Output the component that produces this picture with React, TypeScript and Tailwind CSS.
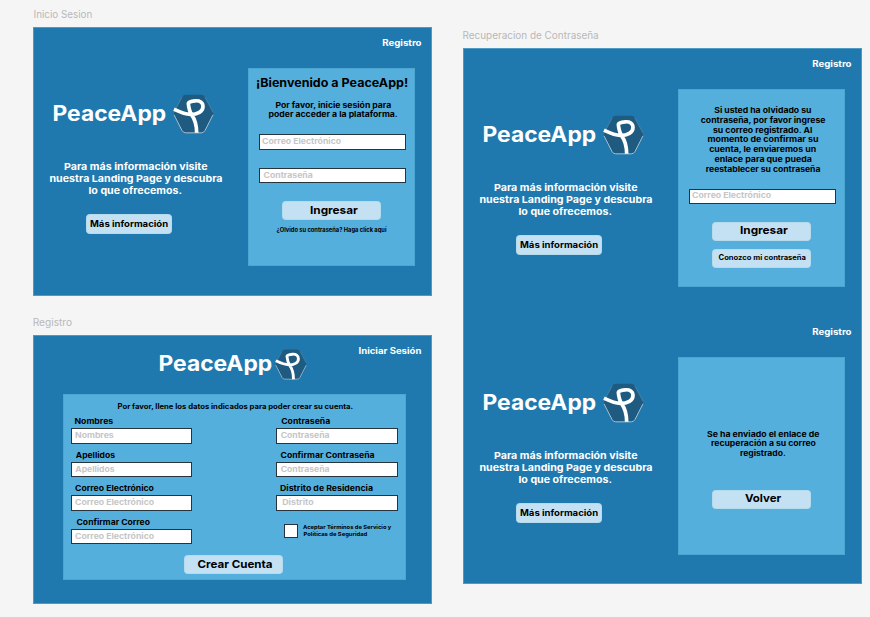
import { useLayoutEffect, useRef, useState } from "react";
import type { ReactNode } from "react";

const FONT = "font-['Inter','Liberation_Sans',sans-serif]";

/** One line of text stretched horizontally to fill a given width. */
function Line({ w, className = "", children }: { w: number; className?: string; children: string }) {
  const ref = useRef<HTMLSpanElement>(null);
  const [scale, setScale] = useState(1);
  useLayoutEffect(() => {
    if (ref.current) setScale(w / ref.current.offsetWidth);
  }, [w, children]);
  return (
    <span className={`flex shrink-0 justify-center ${className}`} style={{ width: w }}>
      <span ref={ref} className="shrink-0 whitespace-nowrap" style={{ transform: `scaleX(${scale})` }}>
        {children}
      </span>
    </span>
  );
}

function Logo({ className }: { className: string }) {
  return (
    <svg viewBox="0 0 123 119" className={className} fill="none">
      <path
        d="M38 2H85Q92 2 96 9L119 52Q122 58 119 64L96 109Q92 116 85 116H38Q31 116 27 109L4 64Q1 58 4 52L27 9Q31 2 38 2Z"
        fill="#1f5b80"
      />
      <path d="M3 62L27 109Q31 116 38 116H85Q92 116 96 109L120 62" stroke="#a9bfcd" strokeWidth="3" />
      <path d="M96 9L120 54M27 9L3 54" stroke="#6a99b5" strokeWidth="1.5" />
      <path
        d="M3 45C18 52 34 60 52 61C74 61 90 52 90 37C90 24 80 19 67 20C56 21 46 24 46 28C47 38 49 51 56 62C67 77 71 94 71 116"
        stroke="#fff"
        strokeWidth="11"
      />
    </svg>
  );
}

function Input({ w, indent, className = "", children }: { w: number; indent: string; className?: string; children: string }) {
  return (
    <div className={`flex h-[15.5px] items-center border border-[#26343d] bg-white text-[7.8px] text-[#c6c6c6] ${indent} ${className}`}>
      <Line w={w}>{children}</Line>
    </div>
  );
}

function Button({ size = "h-[19px] w-[99px] pl-[4px]", className = "", children }: { size?: string; className?: string; children: ReactNode }) {
  return (
    <button className={`flex shrink-0 items-center justify-center rounded-[3.5px] border border-[#b4dcec] bg-[#c4e1f4] font-bold text-black ${size} ${className}`}>
      {children}
    </button>
  );
}

function Intro() {
  return (
    <div className="w-[215px] shrink-0 pt-[26px] font-bold text-white">
      <div className="flex h-10 items-center gap-[7px] pl-[19px]">
        <Line w={114} className="text-[21px]">PeaceApp</Line>
        <Logo className="h-10 w-[41px]" />
      </div>
      <div className="mt-[27px] flex w-[205px] flex-col items-center text-[9.6px] leading-[12px]">
        <Line w={143}>Para más información visite</Line>
        <Line w={173}>nuestra Landing Page y descubra</Line>
        <Line w={93}>lo que ofrecemos.</Line>
      </div>
      <Button size="h-[20px] w-[86px] pl-[1px]" className="mt-[17px] ml-[53px] text-[8.8px]">
        <Line w={78}>Más información</Line>
      </Button>
    </div>
  );
}

function Screen({ children }: { children: ReactNode }) {
  return (
    <div className="h-[268px]">
      <div className="flex h-[41px] justify-end pt-[9px] pr-[10px] text-[8.8px] leading-[13px] font-bold text-white">
        <Line w={39.5}>Registro</Line>
      </div>
      <div className="flex">
        <Intro />
        <div className="flex h-[198px] w-[167px] flex-col items-center border border-[#4ba7d2] bg-[#55afdc] font-bold text-black">
          {children}
        </div>
      </div>
    </div>
  );
}

function Frame({ className, children }: { className: string; children: ReactNode }) {
  return (
    <div className={`w-[399px] bg-[#2079ae] shadow-[inset_0_0_0_1px_#4d9bc5] ${className}`}>{children}</div>
  );
}

function Label({ w, children }: { w: number; children: string }) {
  return (
    <div className="flex h-3 text-[10px] leading-3 font-normal text-[#b8b8b8]">
      <Line w={w}>{children}</Line>
    </div>
  );
}

type FieldData = { label: string; lw: number; pad: string; hint: string; hw: number; indent: string };

const leftFields: FieldData[] = [
  { label: "Nombres", lw: 39, pad: "pl-[3px]", hint: "Nombres", hw: 39, indent: "pl-[3px]" },
  { label: "Apellidos", lw: 39.5, pad: "pl-[4.5px]", hint: "Apellidos", hw: 39.5, indent: "pl-[3.5px]" },
  { label: "Correo Electrónico", lw: 79, pad: "pl-[3.5px]", hint: "Correo Electrónico", hw: 79, indent: "pl-[3px]" },
  { label: "Confirmar Correo", lw: 74, pad: "pl-[5px]", hint: "Correo Electrónico", hw: 79, indent: "pl-[3px]" },
];

const rightFields: FieldData[] = [
  { label: "Contraseña", lw: 48.5, pad: "pl-[5px]", hint: "Contraseña", hw: 48.5, indent: "pl-[4px]" },
  { label: "Confirmar Contraseña", lw: 94, pad: "pl-[4.5px]", hint: "Contraseña", hw: 48.5, indent: "pl-[4px]" },
  { label: "Distrito de Residencia", lw: 93, pad: "pl-[4px]", hint: "Distrito", hw: 31.5, indent: "pl-[5px]" },
];

function Field({ f }: { f: FieldData }) {
  return (
    <div className="h-[33.6px]">
      <div className={`flex h-[15px] items-center pt-px text-[8px] ${f.pad}`}>
        <Line w={f.lw}>{f.label}</Line>
      </div>
      <Input w={f.hw} indent={f.indent}>{f.hint}</Input>
    </div>
  );
}

export default function App() {
  return (
    <main className={`flex h-[617px] w-[870px] gap-[31px] overflow-hidden bg-[#f5f5f5] pl-[33px] font-bold ${FONT}`}>
      <section className="w-[399px] shrink-0 pt-[8px]">
        <Label w={59}>Inicio Sesion</Label>
        <Frame className="mt-[7px] h-[268.5px]">
          <Screen>
            <Line w={152} className="mt-[5px] ml-[2px] text-[11.7px] leading-[18px]">¡Bienvenido a PeaceApp!</Line>
            <div className="mt-[8.5px] flex flex-col items-center pl-[3px] text-[7.8px] leading-[9.8px]">
              <Line w={116}>Por favor, inicie sesión para</Line>
              <Line w={129}>poder acceder a la plataforma.</Line>
            </div>
            <Input w={79} indent="pl-[2.5px]" className="mt-[14px] ml-[2px] w-[147px]">Correo Electrónico</Input>
            <Input w={49} indent="pl-[4px]" className="mt-[18px] ml-[2px] w-[147px]">Contraseña</Input>
            <Button className="mt-[18px] text-[10.8px]">
              <Line w={48}>Ingresar</Line>
            </Button>
            <Line w={110} className="mt-[5px] text-[5.6px] leading-[10px]">¿Olvido su contraseña? Haga click aquí</Line>
          </Screen>
        </Frame>

        <div className="mt-[20.5px]">
          <Label w={39.5}>Registro</Label>
        </div>
        <Frame className="mt-[7px] h-[268.5px]">
          <header className="flex h-[59px] pt-[9px] text-white">
            <div className="flex h-[40px] items-center gap-[2px] pl-[125.5px]">
              <Line w={114} className="pb-px text-[21px]">PeaceApp</Line>
              <Logo className="mt-[1px] h-[31px] w-[32px]" />
            </div>
            <Line w={63} className="mr-[10.5px] ml-auto text-[8.8px] leading-[13px]">Iniciar Sesión</Line>
          </header>
          <div className="ml-[30px] h-[186px] w-[343px] border border-[#4ba7d2] bg-[#55afdc] text-black">
            <div className="flex pt-[6.5px] pl-[53.5px] text-[7px] leading-[10px]">
              <Line w={236}>Por favor, llene los datos indicados para poder crear su cuenta.</Line>
            </div>
            <div className="mt-[1.5px] flex justify-between pr-[7px] pl-[7px]">
              <div className="w-[121px]">
                {leftFields.map((f, i) => <Field key={i} f={f} />)}
              </div>
              <div className="w-[122px]">
                {rightFields.map((f, i) => <Field key={i} f={f} />)}
                <div className="flex items-start pt-[10px] pl-[8px]">
                  <div className="h-[14px] w-[14px] border border-[#26343d] bg-white" />
                  <div className="ml-[5px] pt-[0.5px] text-[5.4px] leading-[6.7px]">
                    <Line w={88}>Aceptar Términos de Servicio y</Line>
                    <Line w={64}>Políticas de Seguridad</Line>
                  </div>
                </div>
              </div>
            </div>
            <Button className="mt-[8px] ml-[120px] text-[10.8px]">
              <Line w={75}>Crear Cuenta</Line>
            </Button>
          </div>
        </Frame>
      </section>

      <section className="w-[399px] shrink-0 pt-[29px]">
        <Label w={136}>Recuperacion de Contraseña</Label>
        <Frame className="mt-[7px] h-[536px]">
          <Screen>
            <div className="mt-[16px] flex flex-col items-center pl-[3px] text-[7.8px] leading-[9.8px]">
              <Line w={97.5}>Si usted ha olvidado su</Line>
              <Line w={124.5}>contraseña, por favor ingrese</Line>
              <Line w={99}>su correo registrado. Al</Line>
              <Line w={111}>momento de confirmar su</Line>
              <Line w={106.5}>cuenta, le enviaremos un</Line>
              <Line w={97}>enlace para que pueda</Line>
              <Line w={114.5}>reestablecer su contraseña</Line>
            </div>
            <Input w={79} indent="pl-[2.5px]" className="mt-[14px] ml-[2px] w-[147px]">Correo Electrónico</Input>
            <Button className="mt-[18px] text-[10.8px]">
              <Line w={48}>Ingresar</Line>
            </Button>
            <Button size="h-[19px] w-[99px] pl-[2px]" className="mt-[8px] text-[7px]">
              <Line w={88}>Conozco mi contraseña</Line>
            </Button>
          </Screen>
          <Screen>
            <div className="mt-[71.5px] flex flex-col items-center pl-[3px] text-[7.8px] leading-[9.8px]">
              <Line w={112}>Se ha enviado el enlace de</Line>
              <Line w={105}>recuperación a su correo</Line>
              <Line w={46}>registrado.</Line>
            </div>
            <Button className="mt-[31px] text-[10.8px]">
              <Line w={36}>Volver</Line>
            </Button>
          </Screen>
        </Frame>
      </section>
    </main>
  );
}
